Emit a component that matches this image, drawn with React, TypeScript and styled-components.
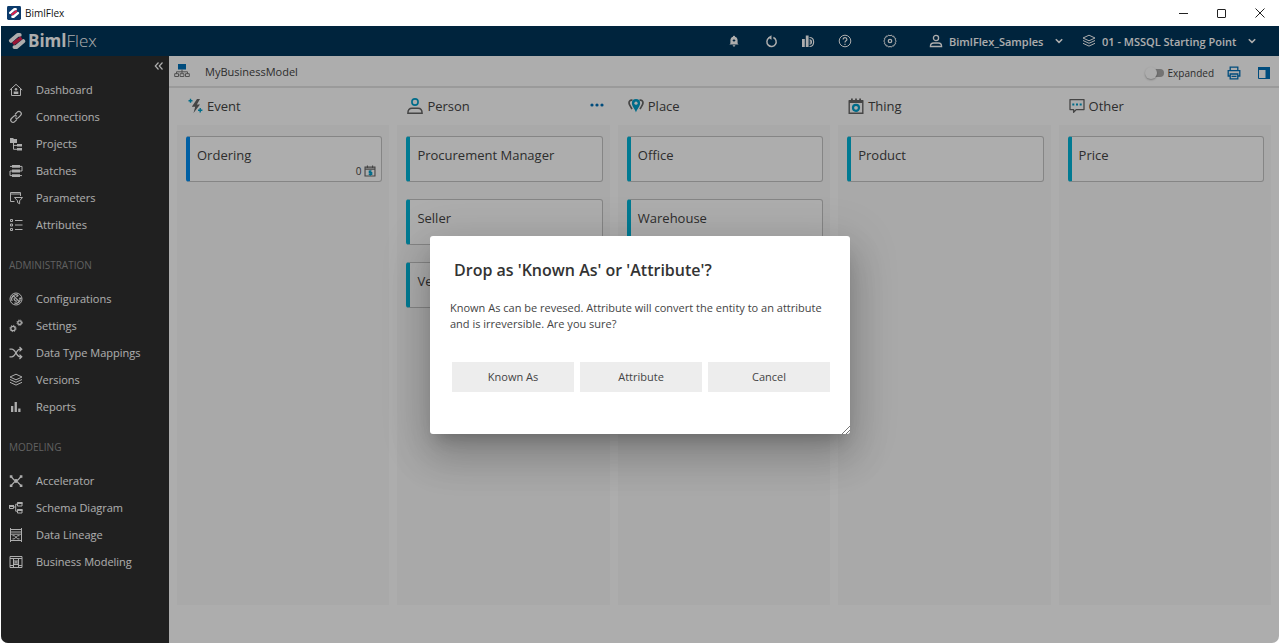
import React from 'react';
import styled, { createGlobalStyle } from 'styled-components';

const GlobalStyle = createGlobalStyle`
  *, *::before, *::after { box-sizing: border-box; }
  body { margin: 0; background: #fff; }
  body, button, input, select {
    font-family: 'Open Sans', 'Noto Sans', sans-serif;
    font-size: 11px;
  }
  button, select { color: inherit; border: 0; background: none; padding: 0; margin: 0; }
  h1, h2, p, ul { margin: 0; padding: 0; font-weight: 400; list-style: none; }
  svg { display: block; flex: none; }
`;

/* ---------- window frame ---------- */
const Window = styled.div`
  display: flex;
  flex-direction: column;
  min-height: 100vh;
  padding: 0 1px 1px;
`;
const TitleBar = styled.div`
  display: flex;
  align-items: center;
  height: 26px;
  padding-left: 6px;
  gap: 4px;
  color: #111;
  font-size: 10px;
`;
const WindowControls = styled.div`
  display: flex;
  margin-left: auto;
`;
const WindowButton = styled.button`
  display: grid;
  place-items: center;
  width: 38px;
  height: 26px;
`;
const AppArea = styled.div`
  position: relative;
  display: flex;
  flex-direction: column;
  flex: 1;
  overflow: hidden;
  border-radius: 0 0 7px 7px;
`;

/* ---------- top header ---------- */
const Header = styled.header`
  display: flex;
  align-items: center;
  height: 30px;
  padding: 0 23px 0 7px;
  background: #00355a;
  color: #fff;
`;
const Brand = styled.a`
  display: flex;
  align-items: center;
  gap: 2px;
  color: #fff;
  font-size: 17px;
  line-height: 24px;
  text-decoration: none;
  strong { font-weight: 700; }
  span { font-weight: 300; }
`;
const HeaderTools = styled.div`
  display: flex;
  align-items: center;
  gap: 21px;
  margin-left: auto;
`;
const IconButton = styled.button<{ $tone?: string }>`
  display: grid;
  place-items: center;
  width: 16px;
  height: 20px;
  color: ${(p) => p.$tone || 'inherit'};
`;
const SettingsButton = styled(IconButton)`
  margin-left: 8px;
`;
const Picker = styled.label`
  display: flex;
  align-items: center;
  gap: 6px;
  &:first-of-type { margin-left: 10px; }
  & + & { margin-left: -2px; }
`;
const PickerSelect = styled.select`
  appearance: none;
  height: 20px;
  margin-right: 5px;
  font-weight: 600;
  option { color: #222; }
`;

/* ---------- sidebar ---------- */
const Body = styled.div`
  display: flex;
  flex: 1;
`;
const Sidebar = styled.nav`
  flex: 0 0 168px;
  background: #303030;
  color: #fff;
`;
const CollapseRow = styled.div`
  display: flex;
  justify-content: flex-end;
  height: 20px;
  padding-right: 2px;
`;
const NavLink = styled.a`
  display: flex;
  align-items: center;
  gap: 13px;
  height: 27px;
  padding-left: 8px;
  color: #fff;
  font-weight: 500;
  text-decoration: none;
`;
const SectionLabel = styled.h2`
  height: 47px;
  padding: 6px 0 0 8px;
  color: #8f8f8f;
  font-size: 10px;
  line-height: 42px;
`;

/* ---------- model board ---------- */
const Main = styled.main`
  display: flex;
  flex-direction: column;
  flex: 1;
  min-width: 0;
  background: #fff;
  color: #444;
`;
const Toolbar = styled.div`
  display: flex;
  align-items: center;
  height: 32px;
  padding: 0 7px 0 5px;
  border-bottom: 2px solid #e4e4e4;
`;
const ModelName = styled.h1`
  margin-left: 15px;
  font-size: 11px;
`;
const ToolbarEnd = styled.div`
  display: flex;
  align-items: center;
  gap: 14px;
  margin-left: auto;
  padding-top: 3px;
`;
const SwitchLabel = styled.label`
  display: flex;
  align-items: center;
  gap: 4px;
  margin-right: -2px;
  font-size: 10px;
`;
const Switch = styled.input`
  appearance: none;
  display: flex;
  align-items: center;
  width: 18px;
  height: 8px;
  margin: 0;
  border-radius: 4px;
  background: #aaa;
  &::before {
    content: '';
    flex: none;
    width: 12px;
    height: 12px;
    margin-left: -1px;
    border-radius: 50%;
    background: #fff;
    box-shadow: 0 1px 2px rgba(0, 0, 0, 0.3);
  }
`;
const Board = styled.div`
  display: grid;
  grid-template-columns: repeat(5, 1fr);
  gap: 8px;
  flex: 1;
  padding: 0 8px 38px;
`;
const Lane = styled.section`
  display: flex;
  flex-direction: column;
`;
const LaneHead = styled.div`
  display: flex;
  align-items: center;
  gap: 4px;
  height: 37px;
  padding: 0 5px 2px 10px;
`;
const LaneTitle = styled.h2`
  font-size: 13px;
  line-height: 18px;
`;
const MoreButton = styled(IconButton)`
  margin-left: auto;
`;
const LaneBody = styled.ul`
  display: flex;
  flex-direction: column;
  flex: 1;
  gap: 17px;
  padding: 11px 7px 11px 9px;
  background: #f9f9f9;
`;
const Card = styled.li<{ $accent: string }>`
  display: flex;
  flex-direction: column;
  justify-content: space-between;
  height: 46px;
  padding: 9px 5px 3px 7px;
  border: 1px solid #c4c4c4;
  border-left: 4px solid ${(p) => p.$accent};
  border-radius: 3px;
  background: #fff;
  font-size: 13px;
  line-height: 18px;
`;
const CardCount = styled.div`
  display: flex;
  align-items: center;
  align-self: flex-end;
  gap: 3px;
  font-size: 10px;
  line-height: 14px;
`;

/* ---------- modal ---------- */
const Backdrop = styled.div`
  position: absolute;
  inset: 0;
  display: grid;
  place-items: center;
  background: rgba(0, 0, 0, 0.32);
`;
const Dialog = styled.div`
  position: relative;
  width: 420px;
  height: 198px;
  padding: 21px 20px;
  border-radius: 3px;
  background: #fff;
  color: #444;
  box-shadow: 0 11px 15px -7px rgba(0, 0, 0, 0.2), 0 24px 38px 3px rgba(0, 0, 0, 0.14),
    0 9px 46px 8px rgba(0, 0, 0, 0.12);
`;
const DialogTitle = styled.h2`
  padding-left: 4px;
  color: #333;
  font-size: 16px;
  font-weight: 600;
  line-height: 26px;
`;
const DialogText = styled.p`
  margin-top: 17px;
  font-size: 11px;
  line-height: 16px;
`;
const DialogActions = styled.div`
  display: grid;
  grid-template-columns: repeat(3, 1fr);
  gap: 6px;
  margin-top: 30px;
  padding-left: 2px;
`;
const DialogButton = styled.button`
  height: 30px;
  background: #ededed;
  font-size: 11px;
`;
const ResizeGrip = styled.span`
  position: absolute;
  right: 0;
  bottom: 0;
`;

/* ---------- icons ---------- */
type IconProps = { size?: number; view?: number; width?: number; children: React.ReactNode };
const Icon = ({ size = 14, view = 14, width = 1, children }: IconProps) => (
  <svg width={size} height={size} viewBox={`0 0 ${view} ${view}`} fill="none" stroke="currentColor" strokeWidth={width} aria-hidden="true">
    {children}
  </svg>
);
const fill = { fill: 'currentColor', stroke: 'none' };
const TEAL = '#00a0cc';
const BLUE = '#0070b8';

const LogoMark = ({ size, boxed }: { size: number; boxed?: boolean }) => (
  <svg width={size} height={size} viewBox="0 0 20 20" aria-hidden="true">
    {boxed && <rect width="20" height="20" rx="2" fill="#0b3a6b" />}
    <g transform={boxed ? 'translate(2 2) scale(.8)' : undefined} fill="none">
      <path d="M3.200 9.800 10.800 3.200H13" stroke="#fff" strokeWidth="4.400" strokeLinecap="round" strokeLinejoin="round" />
      <path d="M5.600 13.200 15 6.400" stroke="#e0204e" strokeWidth="3.800" />
      <path d="M7.200 16.800H9.200L17 10.200" stroke="#fff" strokeWidth="4.400" strokeLinecap="round" strokeLinejoin="round" />
    </g>
  </svg>
);

const navIcons: Record<string, React.ReactNode> = {
  Dashboard: <Icon><path d="M.8 7 7 1.3 13.2 7M2.500 6v6.500h9V6" /><circle cx="7" cy="6.300" r="1.300" {...fill} /><path d="M4.700 8.400h4.600V11H4.700z" {...fill} /></Icon>,
  Connections: <Icon width={1.2}><path d="M6 4.500 8.200 2.200a2.300 2.300 0 0 1 3.400 0 2.300 2.300 0 0 1 0 3.200L9.400 7.600a2.300 2.300 0 0 1-3.200 0M8 9.400l-2.300 2.300a2.300 2.300 0 0 1-3.300 0 2.300 2.300 0 0 1 0-3.200l2.200-2.200a2.300 2.300 0 0 1 3.300 0" /></Icon>,
  Projects: <Icon><path d="M1 1h3l1 1h3v4H1zM8 7h5v2.500H8zM8 11h5v2.500H8z" {...fill} /><path d="M4.500 6v6.300H8M4.500 8.400H8" /></Icon>,
  Batches: <Icon><path d="M3 1h8v2.800H3zM3 5.600h8v2.800H3zM3 10.200h8V13H3z" {...fill} /><path d="M11 2.400h2v4.600h-2M3 7H1v4.600h2M3 2.400H1M11 11.600h2" /></Icon>,
  Parameters: <Icon><path d="M5.500 10.500h-4v-9h10V5M1.500 3h10M5.500 6.500h8L10.600 9.800v3L8.500 11.600V9.800z" /></Icon>,
  Attributes: <Icon><path d="M1.500 1.500h2v2h-2zM1.500 6h2v2h-2zM1.500 10.500h2v2h-2zM6 2.500h7.500M6 7h7.500M6 11.500h7.500" /></Icon>,
  Configurations: <Icon><circle cx="7" cy="7" r="6" /><path d="M3.200 9A4.300 4.300 0 0 1 9 3.200M4.500 3.800 10 9.300M10.900 5.400a4.200 4.200 0 0 1-5.500 5.500M5.200 6.200A2.400 2.400 0 0 0 8 9M7.400 4.800l2-1.500M10 7l2.500-.8" strokeWidth="1.200" /></Icon>,
  Settings: <Icon width={1.300}><circle cx="4" cy="9.500" r="2.200" /><circle cx="4" cy="9.500" r="3.100" strokeWidth="1" strokeDasharray="1.200 1.200" /><circle cx="10.600" cy="3.700" r="1.800" /><circle cx="10.600" cy="3.700" r="2.700" strokeWidth="1" strokeDasharray="1.100 1.100" /></Icon>,
  'Data Type Mappings': <Icon width={1.200}><path d="M.5 3.200h2.300c3.800 0 4.600 7.600 8.200 7.600h1.500M.5 10.800h2.300c3.800 0 4.600-7.600 8.200-7.600h1.500M10.500 1l2.300 2.200-2.300 2.200M10.500 8.600l2.300 2.200-2.300 2.200" /></Icon>,
  Versions: <Icon><path d="M7 1.200 13 4 7 6.800 1 4zM1 6.500l6 2.800 6-2.800M1 9.300l6 2.800 6-2.800" /></Icon>,
  Reports: <Icon><path d="M2 6h2.300v6H2zM5.600 2h2.300v10H5.600zM9.200 8.500h2.300V12H9.200z" {...fill} /></Icon>,
  Accelerator: <Icon width={1.200}><path d="M2 2.500 5 6h4l3-3.500M2 11.700 5.500 8M12 11.700 8.500 8" /><circle cx="7" cy="7" r="2" {...fill} /><path d="M.8 1.200h2.600v2.600H.8zM10.800 1.200h2.600v2.600h-2.600zM.8 10.400h2.600V13H.8zM10.800 10.400h2.600V13h-2.600z" {...fill} /></Icon>,
  'Schema Diagram': <Icon><path d="M.5 4.500h4v3h-4zM8.500 1.500H13V5H8.500zM8.500 8.500H13V12H8.500zM4.500 6H6.700M8.500 3.200H6.700v7h1.800" /><path d="M8.500 1h5v2h-5zM8.500 8h5v2h-5zM0 4h5v2H0z" {...fill} /></Icon>,
  'Data Lineage': <Icon><path d="M1.500 0v14M12.500 0v14M1.500 1.500h11M1.500 4h11M1.500 6.200h11M1.500 12.500h11M3.500 7.700h1.700l3.600 3.200h1.700M3.500 10.900h1.700l3.600-3.200h1.700" /></Icon>,
  'Business Modeling': <Icon><path d="M1 1.500h12v11H1zM1 3.500h12M4.500 3.500v9M9.500 3.500v9M1 10.500h3.500M9.500 10.500H13M4.500 9.500h5" /><path d="M5.500 5h1v1.500h1V5h1v4h-1V7.500h-1V9h-1z" {...fill} /></Icon>,
};

const laneIcons: Record<string, React.ReactNode> = {
  Event: <Icon size={16} view={16}><path d="M10 1 4.800 8.800h3.400L6.500 15l6.500-8.600H9.900L13 1z" fill="#666" stroke="none" /><path d="M3.500.8v4M1.500 2.800h4M13.200 10v4.400M11 12.200h4.400" stroke={TEAL} strokeWidth="1.400" /></Icon>,
  Person: <Icon size={16} view={16}><circle cx="8" cy="4" r="3.100" stroke={TEAL} strokeWidth="1.600" /><path d="M.9 15.200c0-3 1.500-4.900 4.100-4.900h6c2.600 0 4.100 1.900 4.100 4.900z" stroke="#666" strokeWidth="1.500" /></Icon>,
  Place: <Icon size={16} view={16}><path d="M4.500 2.200C2.500 1.600 1 3 1 5c0 1.800 1.700 3.600 3 6M11.500 2.200C13.500 1.600 15 3 15 5c0 1.800-1.700 3.600-3 6" stroke="#666" strokeWidth="1.700" /><path d="M8 14.500C7 11 3.900 8.500 3.900 5.200a4.100 4.100 0 0 1 8.200 0C12.100 8.500 9 11 8 14.500z" fill={TEAL} stroke="none" /><circle cx="8" cy="5.200" r="1.600" fill="#fff" stroke="none" /></Icon>,
  Thing: <Icon size={16} view={16}><path d="M1.200 3h13.600v12.200H1.200z" stroke="#666" strokeWidth="1.400" /><path d="M3 .4h1.800v3H3zM7.100.4h1.800v3H7.100zM11.200.4H13v3h-1.800zM1 2h14v3H1z" fill="#666" stroke="none" /><circle cx="8" cy="9.800" r="3" stroke={TEAL} strokeWidth="2.200" /></Icon>,
  Other: <Icon size={16} view={16}><path d="M1 1.600h14v10H7.200L4.600 14.300v-2.700H1z" stroke="#666" strokeWidth="1.300" strokeLinejoin="round" /><path d="M3.300 5.600h2v2h-2zM7 5.600h2v2H7zM10.700 5.600h2v2h-2z" fill={TEAL} stroke="none" /></Icon>,
};

const Chevron = () => <Icon size={8} view={8} width={1.600}><path d="M.8 2.200 4 5.400 7.200 2.200" /></Icon>;

/* ---------- data ---------- */
const sections = [
  { items: ['Dashboard', 'Connections', 'Projects', 'Batches', 'Parameters', 'Attributes'] },
  { title: 'ADMINISTRATION', items: ['Configurations', 'Settings', 'Data Type Mappings', 'Versions', 'Reports'] },
  { title: 'MODELING', items: ['Accelerator', 'Schema Diagram', 'Data Lineage', 'Business Modeling'] },
];
const lanes: { title: string; cards: string[]; accent?: string; count?: number; menu?: boolean }[] = [
  { title: 'Event', cards: ['Ordering'], accent: '#008cf0', count: 0 },
  { title: 'Person', cards: ['Procurement Manager', 'Seller', 'Vendor'], menu: true },
  { title: 'Place', cards: ['Office', 'Warehouse'] },
  { title: 'Thing', cards: ['Product'] },
  { title: 'Other', cards: ['Price'] },
];

export default function App() {
  return (
    <>
      <GlobalStyle />
      <Window>
        <TitleBar>
          <LogoMark size={14} boxed />
          BimlFlex
          <WindowControls>
            <WindowButton aria-label="Minimize"><Icon size={10} view={10}><path d="M0 5.500h9" stroke="#222" /></Icon></WindowButton>
            <WindowButton aria-label="Maximize"><Icon size={10} view={10}><rect x=".5" y="1.500" width="8" height="8" rx=".5" stroke="#222" /></Icon></WindowButton>
            <WindowButton aria-label="Close"><Icon size={10} view={10}><path d="m.5.500 9 9M9.500.500l-9 9" stroke="#222" /></Icon></WindowButton>
          </WindowControls>
        </TitleBar>

        <AppArea>
          <Header>
            <Brand href="#home"><LogoMark size={18} /><div><strong>Biml</strong><span>Flex</span></div></Brand>
            <HeaderTools>
              <IconButton aria-label="Notifications"><Icon size={12}><path d="M7 .8c.8 0 1.200.5 1.200 1.200 2 .5 3 2.200 3 4.200v3.600l1.200 1.400H1.600l1.200-1.400V6.200c0-2 1-3.700 3-4.200C5.800 1.300 6.200.8 7 .8zM5.500 12h3c0 1-.6 1.500-1.500 1.500S5.500 13 5.500 12z" {...fill} /><path d="M7 5v3M5.500 6.500h3" stroke="#00355a" strokeWidth="1.200" /></Icon></IconButton>
              <IconButton aria-label="Refresh"><Icon size={13} width={1.600}><path d="M9 2.700A5 5 0 1 1 4.200 3.200" /><path d="M7 .2v5L3 2.600z" {...fill} /></Icon></IconButton>
              <IconButton aria-label="Insights"><Icon width={1.200}><path d="M1 5h2.800v8H1zM4.800 1.500h2.800V13H4.800z" {...fill} /><path d="M8.500 3.500c5.500 0 5.500 9 0 9M8.500 5.800c2.600 0 2.600 4.400 0 4.400M8.500 8h1.500" /></Icon></IconButton>
              <IconButton aria-label="Help"><Icon><circle cx="7" cy="7" r="5.800" /><path d="M5.200 5.500c0-2.600 3.700-2.400 3.700 0C8.900 6.900 7 6.800 7 8.500M7 9.700V11" strokeWidth="1.200" /></Icon></IconButton>
              <SettingsButton aria-label="Settings"><Icon><path d="m5.700 1 1.300.9L8.300 1l1 1.300 1.600-.1.300 1.600 1.500.6-.4 1.500.9 1.200-.9 1.200.4 1.500-1.500.6-.3 1.600-1.600-.1-1 1.300-1.300-.9-1.300.9-1-1.300-1.600.1-.3-1.600-1.500-.6.400-1.500L.8 7l.9-1.200-.4-1.500 1.500-.6.300-1.600 1.600.1z" /><circle cx="7" cy="7" r="1.700" strokeWidth="1.300" /></Icon></SettingsButton>
              <Picker>
                <Icon width={1.300}><circle cx="7" cy="4" r="2.600" /><path d="M1.400 12.500c0-2.600 1.400-3.500 3.300-3.500h4.600c1.900 0 3.300.9 3.300 3.500z" /></Icon>
                <PickerSelect aria-label="Customer"><option>BimlFlex_Samples</option></PickerSelect>
                <Chevron />
              </Picker>
              <Picker>
                {navIcons.Versions}
                <PickerSelect aria-label="Version"><option>01 - MSSQL Starting Point</option></PickerSelect>
                <Chevron />
              </Picker>
            </HeaderTools>
          </Header>

          <Body>
            <Sidebar>
              <CollapseRow>
                <IconButton aria-label="Collapse menu"><Icon size={10} view={10} width={1.200}><path d="M4.500 1.500 1.300 5 4.500 8.500M8.500 1.500 5.300 5 8.500 8.500" /></Icon></IconButton>
              </CollapseRow>
              {sections.map((s) => (
                <div key={s.items[0]}>
                  {s.title && <SectionLabel>{s.title}</SectionLabel>}
                  {s.items.map((item) => (
                    <NavLink key={item} href="#section">{navIcons[item]}{item}</NavLink>
                  ))}
                </div>
              ))}
            </Sidebar>

            <Main>
              <Toolbar>
                <Icon size={16} view={16}><path d="M4 1h8v5.500H4z" fill={BLUE} stroke="none" /><path d="M8 6.500V10M2.500 11V8.800h11V11M.7 10.700h3.800v2.800H.7zM6.100 10.700h3.800v2.800H6.100zM11.500 10.700h3.800v2.800h-3.800z" stroke="#777" /></Icon>
                <ModelName>MyBusinessModel</ModelName>
                <ToolbarEnd>
                  <SwitchLabel><Switch type="checkbox" role="switch" />Expanded</SwitchLabel>
                  <IconButton aria-label="Print" $tone={BLUE}><Icon width={1.300}><path d="M3.200 4.500V1.200h7.600v3.300M3.200 10H1.200V4.600h11.600V10h-2M3.200 8h7.600v4.800H3.200zM4.500 10.400h5" /></Icon></IconButton>
                  <IconButton aria-label="Toggle panel" $tone={BLUE}><Icon><path d="M1.500 1.500h11v11h-11z" /><path d="M1 1h12v3H1zM8.500 3H13v10H8.500z" {...fill} /></Icon></IconButton>
                </ToolbarEnd>
              </Toolbar>
              <Board>
                {lanes.map((lane) => (
                  <Lane key={lane.title}>
                    <LaneHead>
                      {laneIcons[lane.title]}
                      <LaneTitle>{lane.title}</LaneTitle>
                      {lane.menu && (
                        <MoreButton aria-label="More" $tone={BLUE}><Icon><circle cx="2" cy="6" r="1.600" {...fill} /><circle cx="7" cy="6" r="1.600" {...fill} /><circle cx="12" cy="6" r="1.600" {...fill} /></Icon></MoreButton>
                      )}
                    </LaneHead>
                    <LaneBody>
                      {lane.cards.map((card) => (
                        <Card key={card} $accent={lane.accent || '#00b4d8'}>
                          {card}
                          {lane.count !== undefined && (
                            <CardCount>
                              {lane.count}
                              <Icon size={12}><path d="M1.200 2.500h11.600v10.300H1.200zM1.200 4.800h11.600M4 .5v3M10 .5v3" stroke="#666" strokeWidth="1.300" /><path d="M9 7H6.200v1.800H9V11H5.500M7.300 6v6.500" stroke={TEAL} strokeWidth="1.400" /></Icon>
                            </CardCount>
                          )}
                        </Card>
                      ))}
                    </LaneBody>
                  </Lane>
                ))}
              </Board>
            </Main>
          </Body>

          <Backdrop>
            <Dialog role="dialog" aria-modal="true" aria-labelledby="drop-title">
              <DialogTitle id="drop-title">Drop as 'Known As' or 'Attribute'?</DialogTitle>
              <DialogText>Known As can be revesed. Attribute will convert the entity to an attribute and is irreversible. Are you sure?</DialogText>
              <DialogActions>
                <DialogButton>Known As</DialogButton>
                <DialogButton>Attribute</DialogButton>
                <DialogButton>Cancel</DialogButton>
              </DialogActions>
              <ResizeGrip><Icon size={8} view={8}><path d="M0 8 8 0M4 8l4-4" stroke="#777" /></Icon></ResizeGrip>
            </Dialog>
          </Backdrop>
        </AppArea>
      </Window>
    </>
  );
}
